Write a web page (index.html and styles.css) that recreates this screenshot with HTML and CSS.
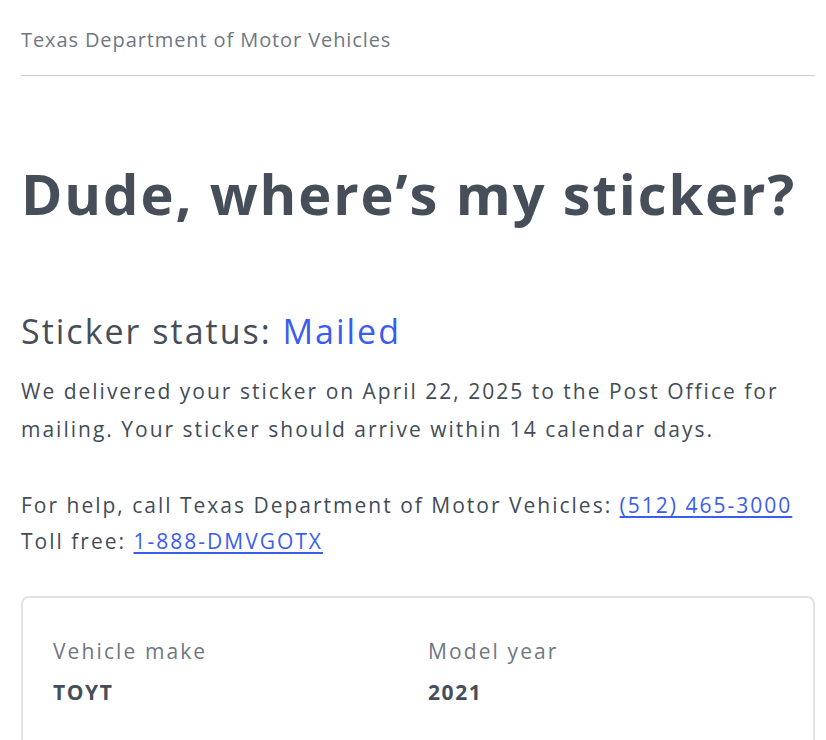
FILE: index.html
```html
<!DOCTYPE html>
<html lang="en">
<head>
<meta charset="utf-8">
<title>Dude, where's my sticker?</title>
<link rel="stylesheet" href="styles.css">
</head>
<body>
<div class="page">
  <header class="site-header">
    <div class="agency">Texas Department of Motor Vehicles</div>
  </header>
  <main>
    <h1 class="title">Dude, where’s my sticker?</h1>
    <h2 class="status">Sticker status: <span class="status-value">Mailed</span></h2>
    <p class="para">We delivered your sticker on April 22, 2025 to the Post Office for mailing. Your sticker should arrive within 14 calendar days.</p>
    <p class="para help">For help, call Texas Department of Motor Vehicles: <a href="#" class="link">(512) 465-3000</a><br>Toll free: <a href="#" class="link">1-888-DMVGOTX</a></p>
    <section class="card">
      <div class="field">
        <div class="label">Vehicle make</div>
        <div class="value">TOYT</div>
      </div>
      <div class="field">
        <div class="label">Model year</div>
        <div class="value">2021</div>
      </div>
    </section>
  </main>
</div>
</body>
</html>
```

FILE: styles.css
```css
html, body {
  margin: 0;
  padding: 0;
  background: #ffffff;
}
body {
  font-family: "Open Sans", "Liberation Sans", sans-serif;
  color: #454e59;
}
.page {
  width: 794px;
  margin-left: 21px;
}
.site-header {
  border-bottom: 1px solid #c9ccd1;
  padding-top: 26px;
  height: 49px;
  box-sizing: content-box;
}
.agency {
  font-size: 20px;
  line-height: 28px;
  letter-spacing: 0.9px;
  color: #6f7782;
}
.title {
  margin: 85px 0 0 0;
  font-size: 56px;
  line-height: 64px;
  font-weight: 700;
  letter-spacing: 1.9px;
  color: #454e59;
}
.status {
  margin: 84px 0 0 0;
  font-size: 34px;
  line-height: 44px;
  font-weight: 400;
  letter-spacing: 2px;
  color: #454e59;
}
.status-value {
  color: #3a5df0;
}
.para {
  margin: 19px 0 0 0;
  font-size: 21px;
  line-height: 38px;
  letter-spacing: 2px;
  color: #434c57;
}
.help {
  margin-top: 39px;
  line-height: 36px;
}
.link {
  color: #3a5df0;
  text-decoration: underline;
  text-underline-offset: 3px;
}
.card {
  margin-top: 37px;
  border: 2px solid #e0e2e5;
  border-radius: 8px;
  padding: 38px 30px 32px;
  display: grid;
  grid-template-columns: 1fr 1fr;
  column-gap: 20px;
  height: 200px;
}
.label {
  font-size: 21px;
  line-height: 30px;
  letter-spacing: 2.1px;
  color: #6f7782;
}
.value {
  margin-top: 11px;
  font-size: 21px;
  line-height: 30px;
  font-weight: 700;
  letter-spacing: 1.6px;
  color: #454e59;
}
```
